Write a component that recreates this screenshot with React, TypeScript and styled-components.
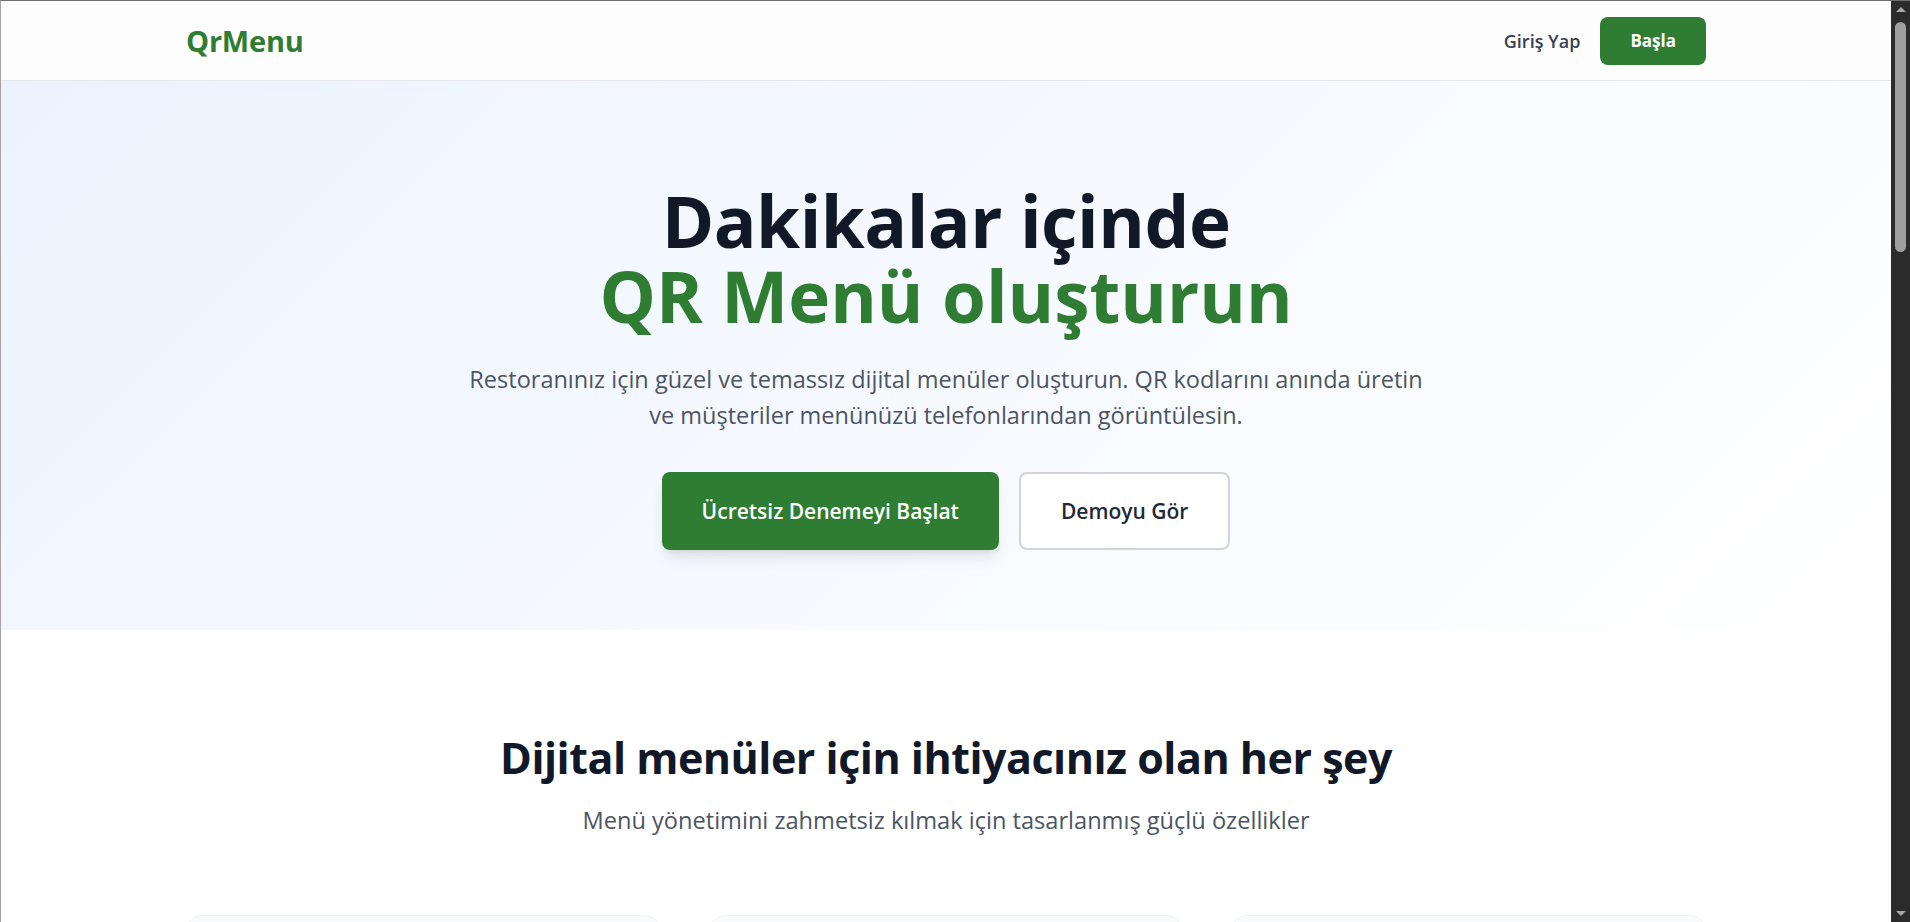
import React from 'react';
import styled, { createGlobalStyle } from 'styled-components';
import { QrCode, Smartphone, Palette, Globe, Zap, Clock } from 'lucide-react';

const GlobalStyle = createGlobalStyle`
  *, *::before, *::after { box-sizing: border-box; }
  html { scrollbar-width: none; }
  html, body { margin: 0; padding: 0; }
  body {
    font-family: "Open Sans", "Noto Sans", Arial, sans-serif;
    color: #111827;
    background: #ffffff;
    -webkit-font-smoothing: antialiased;
  }
`;

const Frame = styled.div`
  border-top: 1px solid #6f6f6f;
  border-left: 1px solid #a3a3a3;
  margin-right: 19px;
  min-height: 100vh;
`;

/* Window scrollbar drawn over the right edge, as in the screenshot */
const ScrollTrack = styled.div`
  position: fixed;
  top: 0;
  right: 0;
  width: 19px;
  height: 100vh;
  background: #2b2b2b;
  border-top: 1px solid #6f6f6f;
  display: flex;
  flex-direction: column;
  align-items: center;
  padding: 6px 0;
`;

const ArrowUp = styled.div`
  width: 0;
  height: 0;
  border-left: 5px solid transparent;
  border-right: 5px solid transparent;
  border-bottom: 5px solid #a8a8a8;
`;

const ArrowDown = styled.div`
  width: 0;
  height: 0;
  border-left: 5px solid transparent;
  border-right: 5px solid transparent;
  border-top: 5px solid #a8a8a8;
  margin-top: auto;
`;

const Thumb = styled.div`
  width: 11px;
  height: 230px;
  margin-top: 10px;
  border-radius: 6px;
  background: #9f9f9f;
`;

const Container = styled.div`
  max-width: 1536px;
  margin: 0 auto;
  padding: 0 8px;
`;

const Header = styled.header`
  height: 80px;
  background: #fdfdfe;
  border-bottom: 1px solid #e5e7eb;
`;

const HeaderInner = styled(Container)`
  height: 100%;
  display: flex;
  align-items: center;
  justify-content: space-between;
`;

const Logo = styled.a`
  font-size: 29px;
  font-weight: 700;
  color: #2e7d32;
  text-decoration: none;
  letter-spacing: -0.2px;
`;

const Nav = styled.nav`
  display: flex;
  align-items: center;
  gap: 20px;
`;

const NavLink = styled.a`
  font-size: 18px;
  font-weight: 600;
  color: #374151;
  text-decoration: none;
`;

const NavButton = styled.button`
  height: 48px;
  padding: 0 30px;
  border: none;
  border-radius: 8px;
  background: #2e7d32;
  color: #ffffff;
  font-family: inherit;
  font-size: 17px;
  font-weight: 700;
  cursor: pointer;
`;

const Hero = styled.section`
  background: linear-gradient(135deg, #ecf3ff 0%, #f6f9fe 50%, #ffffff 100%);
  padding: 102px 0 80px;
  text-align: center;
`;

const Title = styled.h1`
  margin: 0;
  font-size: 71px;
  line-height: 75px;
  font-weight: 700;
  color: #111827;
  letter-spacing: -0.5px;
`;

const Accent = styled.span`
  display: block;
  color: #2e7d32;
  letter-spacing: 0;
`;

const Lead = styled.p`
  margin: 28px auto 0;
  max-width: 966px;
  font-size: 23.5px;
  line-height: 36px;
  color: #4b5563;
`;

const Actions = styled.div`
  display: flex;
  justify-content: center;
  gap: 20px;
  margin-top: 39px;
`;

const BaseButton = styled.button`
  height: 78px;
  padding: 0 40px;
  border-radius: 8px;
  font-family: inherit;
  font-size: 21px;
  font-weight: 600;
  cursor: pointer;
`;

const PrimaryButton = styled(BaseButton)`
  border: none;
  background: #2e7d32;
  color: #ffffff;
  box-shadow: 0 10px 15px -3px rgba(0, 0, 0, 0.1), 0 4px 6px -4px rgba(0, 0, 0, 0.1);
`;

const SecondaryButton = styled(BaseButton)`
  border: 2px solid #d1d5db;
  background: #ffffff;
  color: #1f2937;
`;

const Section = styled.section<{ $tint?: boolean }>`
  padding: 102px 0 96px;
  background: ${(p) => (p.$tint ? '#f9fafb' : '#ffffff')};
  text-align: center;
`;

const SectionTitle = styled.h2`
  margin: 0;
  font-size: 43px;
  line-height: 52px;
  font-weight: 700;
  color: #111827;
  letter-spacing: -0.5px;
`;

const SectionLead = styled.p`
  margin: 21px 0 0;
  font-size: 23.6px;
  line-height: 30px;
  color: #4b5563;
`;

const CardGrid = styled.div`
  margin-top: 80px;
  display: grid;
  grid-template-columns: repeat(3, 1fr);
  gap: 48px;
  text-align: left;
`;

const Card = styled.div`
  background: #f9fafb;
  border: 1px solid #f1f3f5;
  border-radius: 16px;
  padding: 36px;
  min-height: 260px;
`;

const IconBox = styled.div`
  width: 56px;
  height: 56px;
  border-radius: 12px;
  background: #e8f5e9;
  color: #2e7d32;
  display: flex;
  align-items: center;
  justify-content: center;
`;

const CardTitle = styled.h3`
  margin: 24px 0 10px;
  font-size: 22px;
  font-weight: 700;
  color: #111827;
`;

const CardText = styled.p`
  margin: 0;
  font-size: 17px;
  line-height: 28px;
  color: #4b5563;
`;

const Steps = styled.div`
  margin-top: 80px;
  display: grid;
  grid-template-columns: repeat(3, 1fr);
  gap: 48px;
`;

const Step = styled.div`
  display: flex;
  flex-direction: column;
  align-items: center;
  gap: 16px;
`;

const StepNumber = styled.div`
  width: 72px;
  height: 72px;
  border-radius: 50%;
  background: #2e7d32;
  color: #ffffff;
  font-size: 28px;
  font-weight: 700;
  display: flex;
  align-items: center;
  justify-content: center;
`;

const Cta = styled.section`
  background: #2e7d32;
  padding: 110px 0;
  text-align: center;
  color: #ffffff;
`;

const CtaTitle = styled.h2`
  margin: 0;
  font-size: 44px;
  line-height: 52px;
  font-weight: 700;
`;

const CtaText = styled.p`
  margin: 20px 0 40px;
  font-size: 20px;
  color: #e8f5e9;
`;

const CtaButton = styled(BaseButton)`
  border: none;
  background: #ffffff;
  color: #2e7d32;
`;

const Footer = styled.footer`
  background: #111827;
  color: #9ca3af;
  padding: 80px 0;
`;

const FooterGrid = styled(Container)`
  display: grid;
  grid-template-columns: 2fr 1fr 1fr 1fr;
  gap: 48px;
`;

const FooterHead = styled.h4`
  margin: 0 0 16px;
  color: #ffffff;
  font-size: 18px;
`;

const FooterLink = styled.p`
  margin: 0 0 12px;
  font-size: 16px;
`;

const Copyright = styled(Container)`
  margin-top: 60px;
  padding-top: 30px;
  border-top: 1px solid #1f2937;
  font-size: 15px;
`;

const features = [
  { icon: QrCode, title: 'Anında QR Kodları', text: 'Her masa için saniyeler içinde QR kodları oluşturun ve yazdırın.' },
  { icon: Smartphone, title: 'Mobil Uyumlu', text: 'Menünüz her telefonda ve tablette kusursuz görünür.' },
  { icon: Palette, title: 'Özelleştirilebilir Tasarım', text: 'Renkleri, logoyu ve düzeni markanıza göre ayarlayın.' },
  { icon: Zap, title: 'Anlık Güncellemeler', text: 'Fiyatları ve ürünleri yeniden basım yapmadan güncelleyin.' },
  { icon: Globe, title: 'Çoklu Dil Desteği', text: 'Menünüzü farklı dillerde sunarak misafirlerinize ulaşın.' },
  { icon: Clock, title: 'Zaman Tasarrufu', text: 'Menü yönetimini dakikalar içinde tamamlayın.' },
];

const steps = [
  { n: '1', title: 'Hesap oluşturun', text: 'Ücretsiz kaydolun ve restoranınızı ekleyin.' },
  { n: '2', title: 'Menünüzü ekleyin', text: 'Kategorileri ve ürünleri kolayca girin.' },
  { n: '3', title: 'QR kodunu paylaşın', text: 'Kodu masalara yerleştirin, hepsi bu kadar.' },
];

export default function App() {
  return (
    <>
      <GlobalStyle />
      <Frame>
        <Header>
          <HeaderInner>
            <Logo href="#">QrMenu</Logo>
            <Nav>
              <NavLink href="#">Giriş Yap</NavLink>
              <NavButton>Başla</NavButton>
            </Nav>
          </HeaderInner>
        </Header>

        <Hero>
          <Container>
            <Title>
              Dakikalar içinde
              <Accent>QR Menü oluşturun</Accent>
            </Title>
            <Lead>
              Restoranınız için güzel ve temassız dijital menüler oluşturun. QR kodlarını anında üretin ve
              müşteriler menünüzü telefonlarından görüntülesin.
            </Lead>
            <Actions>
              <PrimaryButton>Ücretsiz Denemeyi Başlat</PrimaryButton>
              <SecondaryButton>Demoyu Gör</SecondaryButton>
            </Actions>
          </Container>
        </Hero>

        <Section>
          <Container>
            <SectionTitle>Dijital menüler için ihtiyacınız olan her şey</SectionTitle>
            <SectionLead>Menü yönetimini zahmetsiz kılmak için tasarlanmış güçlü özellikler</SectionLead>
            <CardGrid>
              {features.map((f) => {
                const Icon = f.icon;
                return (
                  <Card key={f.title}>
                    <IconBox>
                      <Icon size={28} />
                    </IconBox>
                    <CardTitle>{f.title}</CardTitle>
                    <CardText>{f.text}</CardText>
                  </Card>
                );
              })}
            </CardGrid>
          </Container>
        </Section>

        <Section $tint>
          <Container>
            <SectionTitle>Nasıl çalışır?</SectionTitle>
            <SectionLead>Üç basit adımda dijital menünüz hazır</SectionLead>
            <Steps>
              {steps.map((s) => (
                <Step key={s.n}>
                  <StepNumber>{s.n}</StepNumber>
                  <CardTitle>{s.title}</CardTitle>
                  <CardText>{s.text}</CardText>
                </Step>
              ))}
            </Steps>
          </Container>
        </Section>

        <Cta>
          <Container>
            <CtaTitle>Hemen başlamaya hazır mısınız?</CtaTitle>
            <CtaText>Binlerce restoran menülerini QrMenu ile yönetiyor.</CtaText>
            <CtaButton>Ücretsiz Denemeyi Başlat</CtaButton>
          </Container>
        </Cta>

        <Footer>
          <FooterGrid>
            <div>
              <FooterHead>QrMenu</FooterHead>
              <FooterLink>Restoranlar için modern dijital menü çözümü.</FooterLink>
            </div>
            <div>
              <FooterHead>Ürün</FooterHead>
              <FooterLink>Özellikler</FooterLink>
              <FooterLink>Fiyatlandırma</FooterLink>
              <FooterLink>Demo</FooterLink>
            </div>
            <div>
              <FooterHead>Şirket</FooterHead>
              <FooterLink>Hakkımızda</FooterLink>
              <FooterLink>İletişim</FooterLink>
              <FooterLink>Blog</FooterLink>
            </div>
            <div>
              <FooterHead>Destek</FooterHead>
              <FooterLink>Yardım Merkezi</FooterLink>
              <FooterLink>Gizlilik</FooterLink>
              <FooterLink>Koşullar</FooterLink>
            </div>
          </FooterGrid>
          <Copyright>© 2024 QrMenu. Tüm hakları saklıdır.</Copyright>
        </Footer>
      </Frame>
      <ScrollTrack aria-hidden>
        <ArrowUp />
        <Thumb />
        <ArrowDown />
      </ScrollTrack>
    </>
  );
}
